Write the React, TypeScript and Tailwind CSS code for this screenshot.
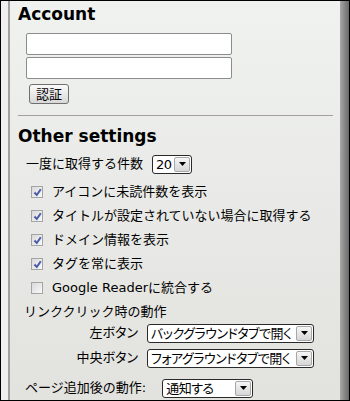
import React from 'react';

const FONT = "font-['DejaVu_Sans','Noto_Sans_CJK_JP',sans-serif]";

function Arrow() {
  return (
    <span className="flex h-full w-[16px] shrink-0 items-center justify-center rounded-[2px] border border-[#a7a7a7] bg-gradient-to-b from-[#f6f6f6] to-[#d6d6d6]">
      <svg width="7" height="4" viewBox="0 0 7 4">
        <path d="M0 0h7L3.5 4z" fill="#000" />
      </svg>
    </span>
  );
}

function FakeSelect({ value, width }: { value: string; width: string }) {
  return (
    <div
      className={`flex h-[19px] ${width} items-center overflow-hidden rounded-[3px] border border-[#2a2a2a] bg-white py-px pl-[3px] pr-px`}
    >
      <span className="flex-1 overflow-hidden whitespace-nowrap text-[13px] leading-[17px] tracking-[-0.5px] [font-feature-settings:'palt']">
        {value}
      </span>
      <Arrow />
    </div>
  );
}

function Check({ checked, label }: { checked: boolean; label: React.ReactNode }) {
  return (
    <div className="flex h-6 items-center pl-[21px]">
      <span className="flex h-[12px] w-[12px] items-center justify-center border border-[#a4a4a4] bg-gradient-to-br from-[#d8d8d8] to-[#fafafa]">
        {checked && (
          <svg width="9" height="9" viewBox="0 0 9 9">
            <path d="M1.5 4.5 L3.8 7 L7.8 1.2" stroke="#4a5ca8" strokeWidth="2" fill="none" />
          </svg>
        )}
      </span>
      <span className="ml-[9px] text-[13px] leading-5">{label}</span>
    </div>
  );
}

export default function App() {
  return (
    <div className={`flex h-[401px] w-[350px] border border-black text-black ${FONT}`}>
      <div className="w-[7px] bg-[#f0f0f0]" />
      <div className="w-[2px] bg-[#a2a2a2]" />
      <div className="w-[330px] bg-gradient-to-b from-[#f0f2f0] to-[#e2e2de]">
        <h2 className="mt-[3px] pl-2 text-[17px] font-bold leading-5">Account</h2>
        <div className="mt-[9px] flex flex-col gap-[2px] pl-4">
          <div className="h-[22px] w-[206px] rounded-[2px] border border-[#8c8c8c] bg-white" />
          <div className="h-[22px] w-[206px] rounded-[2px] border border-[#8c8c8c] bg-white" />
        </div>
        <button className="ml-[19px] mt-[5px] flex h-[20px] w-[40px] items-center justify-center rounded-[3px] border border-[#707070] bg-gradient-to-b from-[#fafafa] to-[#d8d8d8] text-[13px] leading-none">
          認証
        </button>
        <div className="ml-2 mr-[7px] mt-[11px] h-px bg-[#a0a0a0]" />

        <h2 className="mt-[10px] pl-2 text-[17px] font-bold leading-5">Other settings</h2>
        <div className="mt-2 flex h-5 items-center pl-4">
          <span className="text-[13px] leading-5">一度に取得する件数</span>
          <div className="ml-[9px]">
            <FakeSelect value="20" width="w-[40px]" />
          </div>
        </div>

        <div className="mt-[6px]">
          <Check checked label="アイコンに未読件数を表示" />
          <Check checked label="タイトルが設定されていない場合に取得する" />
          <Check checked label="ドメイン情報を表示" />
          <Check checked label="タグを常に表示" />
          <Check checked={false} label="Google Readerに統合する" />
        </div>

        <div className="mt-[2px] pl-[14px] text-[13px] leading-5">リンククリック時の動作</div>
        <div className="mt-px flex items-center">
          <span className="w-[128px] text-right text-[13px] leading-5 [font-feature-settings:'palt']">左ボタン</span>
          <div className="ml-[9px]">
            <FakeSelect value="バックグラウンドタブで開く" width="w-[167px]" />
          </div>
        </div>
        <div className="mt-[5px] flex items-center">
          <span className="w-[128px] text-right text-[13px] leading-5 [font-feature-settings:'palt']">中央ボタン</span>
          <div className="ml-[9px]">
            <FakeSelect value="フォアグラウンドタブで開く" width="w-[167px]" />
          </div>
        </div>
        <div className="mt-[10px] flex items-center pl-[15px]">
          <span className="text-[13px] leading-5">ページ追加後の動作:</span>
          <div className="ml-[16px]">
            <FakeSelect value="通知する" width="w-[91px]" />
          </div>
        </div>
      </div>
      <div className="w-[9px] bg-gradient-to-r from-[#a8a8a8] to-[#6a6a6a]" />
    </div>
  );
}
